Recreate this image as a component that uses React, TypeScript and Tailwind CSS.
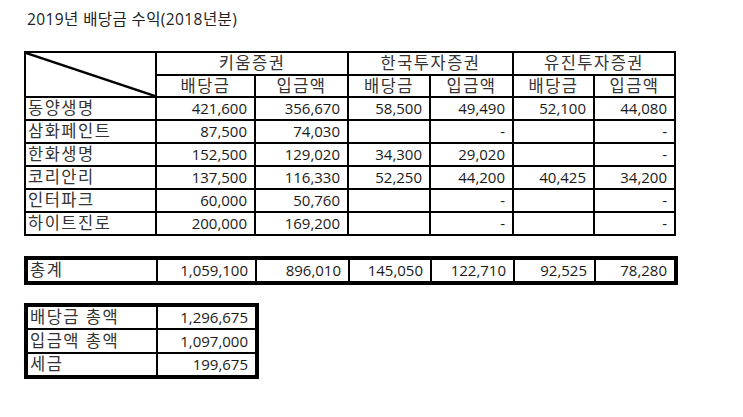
const rows = [
  ["동양생명", "421,600", "356,670", "58,500", "49,490", "52,100", "44,080"],
  ["삼화페인트", "87,500", "74,030", "", "-", "", "-"],
  ["한화생명", "152,500", "129,020", "34,300", "29,020", "", "-"],
  ["코리안리", "137,500", "116,330", "52,250", "44,200", "40,425", "34,200"],
  ["인터파크", "60,000", "50,760", "", "-", "", "-"],
  ["하이트진로", "200,000", "169,200", "", "-", "", "-"],
];

const totals = ["1,059,100", "896,010", "145,050", "122,710", "92,525", "78,280"];

const summary = [
  ["배당금 총액", "1,296,675"],
  ["입금액 총액", "1,097,000"],
  ["세금", "199,675"],
];

const Cols = () => (
  <colgroup>
    <col className="w-[131px]" />
    <col className="w-[99px]" />
    <col className="w-[93px]" />
    <col className="w-[82px]" />
    <col className="w-[83px]" />
    <col className="w-[81px]" />
    <col className="w-[81px]" />
  </colgroup>
);

const label = "border-2 border-black pl-[2px] text-left text-[16.5px] tracking-[1.5px] text-[#333]";
const num = "border-2 border-black pr-[7px] text-right";
const head = "border-2 border-black text-center text-[16.5px] tracking-[1.5px] text-[#333]";

export default function App() {
  return (
    <div className="h-[417px] w-[743px] bg-white font-['Open_Sans','Noto_Sans_CJK_KR',sans-serif] text-[#1a1a1a]">
      <div className="pl-[27px] pt-[8px] text-[15.5px] leading-[22px] tracking-[0.4px] text-[#222]">
        2019년 배당금 수익(2018년분)
      </div>

      {/* main table */}
      <table className="ml-[24px] mt-[21px] w-[651px] table-fixed border-collapse border-2 border-black text-[15px] leading-none">
        <Cols />
        <tbody>
          <tr className="h-[23px]">
            <td rowSpan={2} className="relative border-2 border-black p-0">
              <svg className="absolute inset-0 h-full w-full" viewBox="0 0 100 100" preserveAspectRatio="none">
                <line x1="0" y1="0" x2="100" y2="100" stroke="black" strokeWidth="2.5" vectorEffect="non-scaling-stroke" />
              </svg>
            </td>
            <td colSpan={2} className={head}>키움증권</td>
            <td colSpan={2} className={head}>한국투자증권</td>
            <td colSpan={2} className={head}>유진투자증권</td>
          </tr>
          <tr className="h-[22px]">
            {["배당금", "입금액", "배당금", "입금액", "배당금", "입금액"].map((h, i) => (
              <td key={i} className={head}>{h}</td>
            ))}
          </tr>
          {rows.map((r) => (
            <tr key={r[0]} className="h-[23px]">
              <td className={label}>{r[0]}</td>
              {r.slice(1).map((v, i) => (
                <td key={i} className={num}>{v}</td>
              ))}
            </tr>
          ))}
        </tbody>
      </table>

      {/* total */}
      <table className="ml-[24px] mt-[20px] w-[651px] table-fixed border-collapse border-[4px] border-black text-[15px] leading-none">
        <Cols />
        <tbody>
          <tr className="h-[25px]">
            <td className={label}>총계</td>
            {totals.map((v, i) => (
              <td key={i} className={num}>{v}</td>
            ))}
          </tr>
        </tbody>
      </table>

      {/* summary */}
      <table className="ml-[24px] mt-[18px] w-[231px] table-fixed border-collapse border-[4px] border-black text-[15px] leading-none">
        <colgroup>
          <col className="w-[131px]" />
          <col className="w-[100px]" />
        </colgroup>
        <tbody>
          {summary.map(([k, v]) => (
            <tr key={k} className="h-[24px]">
              <td className={label}>{k}</td>
              <td className={num}>{v}</td>
            </tr>
          ))}
        </tbody>
      </table>
    </div>
  );
}
